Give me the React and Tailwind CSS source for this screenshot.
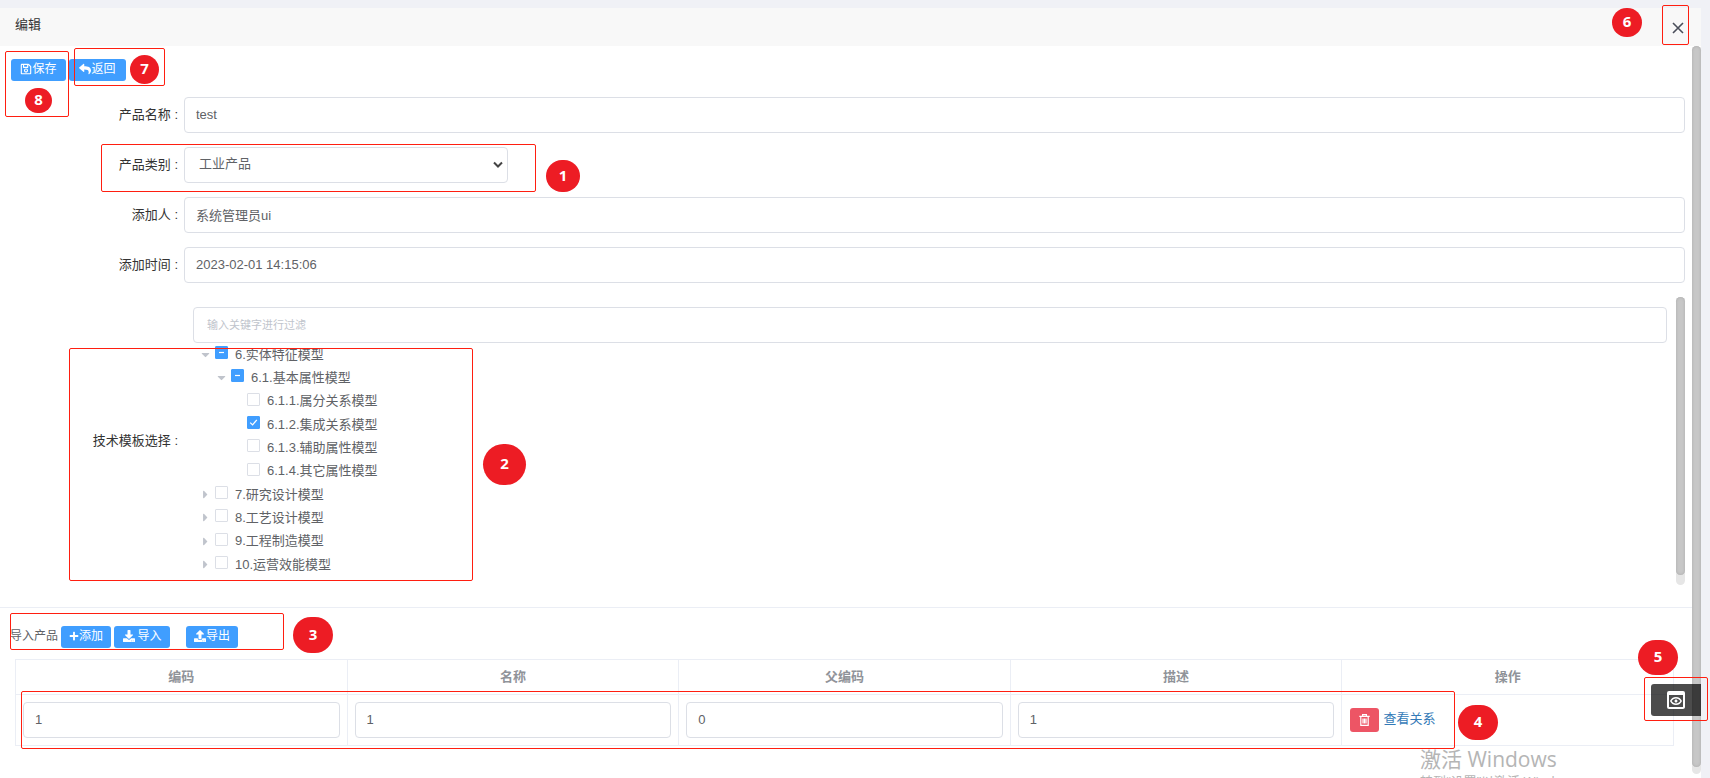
import { FaRegSave, FaReply, FaPlus, FaDownload, FaUpload, FaCaretDown, FaCaretRight } from "react-icons/fa";
import { MdOutlinePreview } from "react-icons/md";

const field =
  "block h-9 w-full rounded border border-[#dcdfe6] bg-white px-[11px] pb-[2px] text-[13px] text-[#606266] outline-none";
const primary =
  "flex h-[22px] items-center justify-center rounded-[3px] bg-[#409eff] pb-[2px] text-xs text-white";

const tree = [
  { text: "6.实体特征模型", level: 0, state: "half", caret: "down" },
  { text: "6.1.基本属性模型", level: 1, state: "half", caret: "down" },
  { text: "6.1.1.属分关系模型", level: 2 },
  { text: "6.1.2.集成关系模型", level: 2, state: "on" },
  { text: "6.1.3.辅助属性模型", level: 2 },
  { text: "6.1.4.其它属性模型", level: 2 },
  { text: "7.研究设计模型", level: 0, caret: "right" },
  { text: "8.工艺设计模型", level: 0, caret: "right" },
  { text: "9.工程制造模型", level: 0, caret: "right" },
  { text: "10.运营效能模型", level: 0, caret: "right" },
];

const indent = ["pl-[6px]", "pl-[22px]", "pl-[38px]"];

function TreeRow({ text, level, state, caret }) {
  return (
    <li className={`flex min-h-0 flex-1 items-center ${indent[level]}`}>
      <span className="flex w-4 shrink-0 text-[13px] text-[#c0c4cc]">
        {caret === "down" && <FaCaretDown />}
        {caret === "right" && <FaCaretRight />}
      </span>
      <label className="flex items-center gap-[7px] whitespace-nowrap text-[13px] text-[#606266]">
        <span className="relative mb-1 block size-[13px]">
          <input
            type="checkbox"
            defaultChecked={Boolean(state)}
            className="block size-[13px] appearance-none rounded-[1px] border border-[#dcdfe6] bg-white checked:border-[#409eff] checked:bg-[#409eff]"
          />
          {state && (
            <svg viewBox="0 0 13 13" className="pointer-events-none absolute inset-0" fill="none" stroke="#fff">
              {state === "half" ? (
                <path d="M4 6.5h5" strokeWidth="1.2" />
              ) : (
                <path d="M3.2 6.6l2.4 2.3 4.2-5" strokeWidth="1.3" />
              )}
            </svg>
          )}
        </span>
        {text}
      </label>
    </li>
  );
}

function Row({ id, label, children }) {
  return (
    <div className="flex items-center">
      <label htmlFor={id} className="w-[184px] shrink-0 pr-[6px] text-right text-[13px] text-[#333]">
        {label} :
      </label>
      <div className="min-w-0 flex-1">{children}</div>
    </div>
  );
}

function Frame({ className }) {
  return <div className={`pointer-events-none absolute rounded-[2px] border border-[#ff1e10] ${className}`} />;
}

function Mark({ n, className }) {
  return (
    <div
      className={`pointer-events-none absolute flex items-center justify-center rounded-full bg-[#ed1c24] pb-[2px] font-['Open_Sans',sans-serif] text-[15px] font-bold text-white ${className}`}
    >
      {n}
    </div>
  );
}

export default function App() {
  return (
    <div className="relative flex h-screen flex-col overflow-hidden bg-[#f0f1f6] pt-2 pr-[9px] font-['Liberation_Sans','Noto_Sans_CJK_SC',sans-serif] text-[13px] text-[#606266]">
      <header className="flex h-[38px] shrink-0 items-center justify-between bg-[#f8f8f8] pr-[17px] pl-[15px]">
        <h1 className="mb-1 text-[13px] text-[#333]">编辑</h1>
        <button type="button" aria-label="关闭" className="mt-[2px] text-[#4a4e5a]">
          <svg viewBox="0 0 12 12" className="size-3" fill="none" stroke="currentColor" strokeWidth="1.6">
            <path d="M1 1l10 10M11 1L1 11" />
          </svg>
        </button>
      </header>

      <div className="flex min-h-0 flex-1 bg-white">
        <main className="min-w-0 flex-1 overflow-hidden">
          <div className="flex gap-[3px] pt-[13px] pl-[11px]">
            <button type="button" className={`${primary} w-[55px]`}>
              <FaRegSave />
              保存
            </button>
            <button type="button" className={`${primary} w-[57px]`}>
              <FaReply />
              返回
            </button>
          </div>

          <form className="flex flex-col gap-[14px] pt-4 pr-[7px]">
            <Row id="name" label="产品名称">
              <input id="name" defaultValue="test" className={field} />
            </Row>
            <Row id="type" label="产品类别">
              <div className="relative w-[324px]">
                <select id="type" className={`${field} appearance-none pl-[14px]`}>
                  <option>工业产品</option>
                </select>
                <svg
                  viewBox="0 0 10 8"
                  className="pointer-events-none absolute top-[14px] right-[5px] h-2 w-[10px]"
                  fill="none"
                  stroke="#444"
                  strokeWidth="2"
                >
                  <path d="M1 1.5l4 4 4-4" />
                </svg>
              </div>
            </Row>
            <Row id="user" label="添加人">
              <input id="user" defaultValue="系统管理员ui" className={field} />
            </Row>
            <Row id="time" label="添加时间">
              <input id="time" defaultValue="2023-02-01 14:15:06" className={field} />
            </Row>
            <Row id="filter" label="技术模板选择">
              <div className="flex h-72 justify-between gap-[9px]">
                <div className="min-w-0 flex-1 pt-[10px] pl-[9px]">
                  <input
                    id="filter"
                    placeholder="输入关键字进行过滤"
                    className="block h-9 w-full rounded border border-[#dcdfe6] px-[13px] text-[11px] outline-none placeholder:text-[#c0c4cc]"
                  />
                  <ul className="flex h-[233px] flex-col">
                    {tree.map((node) => (
                      <TreeRow key={node.text} {...node} />
                    ))}
                  </ul>
                </div>
                <div className="w-[9px] rounded-full bg-[#e6e6e6]">
                  <div className="h-[278px] rounded-full bg-[#c7c7c7] shadow-[inset_0_0_3px_#aaa]" />
                </div>
              </div>
            </Row>
          </form>

          <section className="mt-[22px] border-t border-[#ebeef5] pt-[18px]">
            <div className="flex items-center pl-[10px]">
              <h2 className="mr-[3px] pb-[2px] text-xs">导入产品</h2>
              <button type="button" className={`${primary} mr-[3px] w-[50px]`}>
                <FaPlus className="size-[10px]" />
                添加
              </button>
              <button type="button" className={`${primary} mr-4 w-14 gap-[3px]`}>
                <FaDownload />
                导入
              </button>
              <button type="button" className={`${primary} w-[52px]`}>
                <FaUpload />
                导出
              </button>
            </div>
            <div className="mt-[11px] pr-[18px] pl-[15px]">
              <table className="w-full table-fixed border-collapse">
                <thead>
                  <tr className="h-[35px] text-[13px] text-[#909399]">
                    {["编码", "名称", "父编码", "描述", "操作"].map((h) => (
                      <th key={h} className="border border-[#ebeef5] p-0 font-bold">
                        {h}
                      </th>
                    ))}
                  </tr>
                </thead>
                <tbody>
                  <tr className="h-[51px]">
                    {[
                      ["编码", "1"],
                      ["名称", "1"],
                      ["父编码", "0"],
                      ["描述", "1"],
                    ].map(([name, value]) => (
                      <td key={name} className="border border-[#ebeef5] px-[7px] py-0">
                        <input aria-label={name} defaultValue={value} className={field} />
                      </td>
                    ))}
                    <td className="border border-[#ebeef5] px-2 py-0">
                      <div className="flex items-center gap-1">
                        <button
                          type="button"
                          aria-label="删除"
                          className="flex h-6 w-[29px] items-center justify-center rounded-[3px] bg-[#ed5565] text-white"
                        >
                          <svg
                            viewBox="0 0 11 12"
                            className="h-3 w-[11px]"
                            fill="none"
                            stroke="currentColor"
                            strokeWidth="1.2"
                          >
                            <path d="M0.3 2.4h10.4M3.6 2.4v-1.8h3.8v1.8M1.8 2.5v8.9h7.4v-8.9M4 4.5v5M5.5 4.5v5M7 4.5v5" />
                          </svg>
                        </button>
                        <a href="#relations" className="pb-[2px] text-[13px] text-[#337ab7]">
                          查看关系
                        </a>
                      </div>
                    </td>
                  </tr>
                </tbody>
              </table>
            </div>
          </section>
        </main>
        <div className="mb-1 w-[9px] shrink-0 rounded-full bg-[#e6e6e6] pb-[7px]">
          <div className="h-full rounded-full bg-[#c7c7c7] shadow-[inset_0_0_3px_#aaa]" />
        </div>
      </div>

      <div className="pointer-events-none absolute top-[745px] right-[110px] w-[180px] whitespace-nowrap font-['Open_Sans','Noto_Sans_CJK_SC',sans-serif] text-[#b5b5b5]">
        <p className="text-[21px] leading-7">激活 Windows</p>
        <p className="text-[13px] leading-4">转到“设置”以激活 Windows。</p>
      </div>

      <button
        type="button"
        aria-label="预览"
        className="absolute top-[684px] right-[9px] flex h-8 w-[50px] items-center justify-center rounded-l-[3px] bg-black/70 text-white"
      >
        <MdOutlinePreview className="size-6" />
      </button>

      <Frame className="top-[51px] left-[5px] h-[66px] w-16" />
      <Frame className="top-12 left-[74px] h-[38px] w-[91px]" />
      <Frame className="top-36 left-[101px] h-12 w-[435px]" />
      <Frame className="top-[348px] left-[69px] h-[233px] w-[404px]" />
      <Frame className="top-[613px] left-[10px] h-[37px] w-[274px]" />
      <Frame className="top-[691px] right-[255px] left-[21px] h-[58px]" />
      <Frame className="top-[677px] right-[2px] h-11 w-16" />
      <Frame className="top-[5px] right-[21px] h-10 w-[27px]" />
      <Mark n="8" className="top-[88px] left-[25px] h-[25px] w-[27px]" />
      <Mark n="7" className="top-[55px] left-[130px] size-[29px]" />
      <Mark n="1" className="top-40 left-[546px] h-8 w-[34px]" />
      <Mark n="2" className="top-[444px] left-[483px] h-[41px] w-[43px]" />
      <Mark n="3" className="top-[617px] left-[293px] h-9 w-10" />
      <Mark n="4" className="top-[705px] right-[212px] h-[35px] w-10" />
      <Mark n="5" className="top-[640px] right-8 h-[35px] w-10" />
      <Mark n="6" className="top-2 right-[68px] h-[29px] w-[30px]" />
    </div>
  );
}
